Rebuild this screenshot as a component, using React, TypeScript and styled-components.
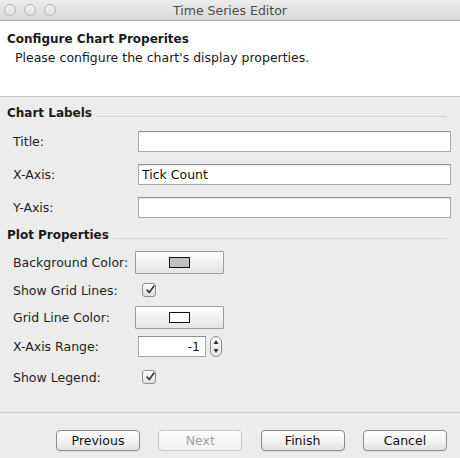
import { createGlobalStyle, styled } from 'styled-components'

const GlobalStyle = createGlobalStyle`
  html, body {
    margin: 0;
    padding: 0;
    background: #ececec;
  }
  body {
    font-family: 'DejaVu Sans', 'Liberation Sans', sans-serif;
    font-size: 12.5px;
    color: #1a1a1a;
  }
`

function Check() {
  return (
    <svg width="14" height="14" viewBox="0 0 14 14">
      <path d="M3 7.2 L6 10.5 L12.5 1.5" fill="none" stroke="#2e2e2e" strokeWidth="2.2" strokeLinecap="round" strokeLinejoin="round" />
    </svg>
  )
}

function Spinner() {
  return (
    <SpinBox>
      <svg width="12" height="21" viewBox="0 0 12 21">
        <path d="M6 4 L8.5 8 L3.5 8 Z" fill="#333" />
        <path d="M6 17 L8.5 13 L3.5 13 Z" fill="#333" />
      </svg>
    </SpinBox>
  )
}

function Section({ title }: { title: string }) {
  return (
    <SectionHead>
      <span>{title}</span>
      <SectionRule />
    </SectionHead>
  )
}

export default function App() {
  return (
    <Window>
      <GlobalStyle />
      <TitleBar>
        <Lights>
          <Light />
          <Light />
          <Light />
        </Lights>
        <TitleText>Time Series Editor</TitleText>
      </TitleBar>

      <Header>
        <HeaderTitle>Configure Chart Properites</HeaderTitle>
        <HeaderSub>Please configure the chart's display properties.</HeaderSub>
      </Header>

      <Body>
        <Section title="Chart Labels" />
        <LabelGrid>
          <Label>Title:</Label>
          <TextField defaultValue="" />
          <Label>X-Axis:</Label>
          <TextField defaultValue="Tick Count" />
          <Label>Y-Axis:</Label>
          <TextField defaultValue="" />
        </LabelGrid>

        <Section title="Plot Properties" />
        <PlotList>
          <Row $h={28}>
            <Label>Background Color:</Label>
            <ColorButton>
              <Swatch $color="#c0c0c0" />
            </ColorButton>
          </Row>
          <Row $h={28}>
            <Label>Show Grid Lines:</Label>
            <CheckBox>
              <Check />
            </CheckBox>
          </Row>
          <Row $h={27}>
            <Label>Grid Line Color:</Label>
            <ColorButton>
              <Swatch $color="#ffffff" />
            </ColorButton>
          </Row>
          <Row $h={30}>
            <Label>X-Axis Range:</Label>
            <NumberWrap>
              <NumberField>-1</NumberField>
              <Spinner />
            </NumberWrap>
          </Row>
          <Row $h={32}>
            <Label>Show Legend:</Label>
            <CheckBox>
              <Check />
            </CheckBox>
          </Row>
        </PlotList>
      </Body>

      <Footer>
        <PushButton>Previous</PushButton>
        <PushButton disabled>Next</PushButton>
        <PushButton>Finish</PushButton>
        <PushButton>Cancel</PushButton>
      </Footer>
    </Window>
  )
}

const Window = styled.div`
  width: 460px;
  height: 458px;
  display: flex;
  flex-direction: column;
  background: #ececec;
  overflow: hidden;
`

const TitleBar = styled.div`
  height: 20px;
  flex: none;
  position: relative;
  display: flex;
  align-items: center;
  justify-content: center;
  background: linear-gradient(#ececec, #d9d9d9);
  border-bottom: 1px solid #a6a6a6;
`

const Lights = styled.div`
  position: absolute;
  left: 4px;
  top: 4px;
  display: flex;
  gap: 8px;
`

const Light = styled.div`
  width: 10px;
  height: 10px;
  border-radius: 50%;
  border: 1px solid #b8b8b8;
  background: linear-gradient(#f2f2f2, #dedede);
`

const TitleText = styled.div`
  font-size: 12.5px;
  color: #4c4c4c;
`

const Header = styled.div`
  height: 76px;
  flex: none;
  box-sizing: border-box;
  background: #ffffff;
  border-bottom: 1px solid #c4c4c4;
  padding: 10px 0 0 7px;
`

const HeaderTitle = styled.div`
  font-weight: bold;
  font-size: 12px;
  line-height: 16px;
`

const HeaderSub = styled.div`
  margin-top: 3px;
  padding-left: 8px;
  line-height: 16px;
`

const Body = styled.div`
  flex: 1;
  padding: 8px 13px 0 7px;
`

const SectionHead = styled.div`
  display: flex;
  align-items: center;
  gap: 4px;
  height: 16px;
  font-weight: bold;
  font-size: 12px;
  line-height: 16px;
`

const SectionRule = styled.div`
  flex: 1;
  height: 1px;
  margin-top: 7px;
  background: #d4d4d4;
`

const LabelGrid = styled.div`
  display: grid;
  grid-template-columns: 125px 1fr;
  grid-auto-rows: 21px;
  row-gap: 12px;
  align-items: center;
  padding: 10px 0 0 6px;
  margin-right: -4px;
  margin-bottom: 9px;
`

const Label = styled.div`
  color: #1e1e1e;
  white-space: nowrap;
`

const TextField = styled.input`
  box-sizing: border-box;
  height: 21px;
  width: 100%;
  margin: 0;
  padding: 0 3px;
  font: inherit;
  color: #111;
  background: #fff;
  border: 1px solid #a9a9a9;
  border-top-color: #8f8f8f;
  box-shadow: inset 0 1px 1px rgba(0, 0, 0, 0.08);
  outline: none;
`

const PlotList = styled.div`
  display: flex;
  flex-direction: column;
  padding: 5px 0 0 6px;
`

const Row = styled.div<{ $h: number }>`
  display: grid;
  grid-template-columns: 122px auto;
  align-items: center;
  height: ${({ $h }) => $h}px;
`

const ColorButton = styled.div`
  box-sizing: border-box;
  width: 89px;
  height: 23px;
  display: flex;
  align-items: center;
  justify-content: center;
  border: 1px solid #9c9c9c;
  border-radius: 1px;
  background: linear-gradient(#ffffff, #f1f1f1 50%, #e4e4e4);
`

const Swatch = styled.div<{ $color: string }>`
  width: 19px;
  height: 9px;
  border: 1px solid #111;
  background: ${({ $color }) => $color};
`

const CheckBox = styled.div`
  box-sizing: border-box;
  width: 14px;
  height: 14px;
  margin-left: 7px;
  border: 1px solid #8e8e8e;
  border-radius: 3px;
  background: linear-gradient(#fdfdfd, #dedede);
  display: flex;
  align-items: flex-end;
  justify-content: center;
  overflow: visible;

  svg {
    margin-bottom: -1px;
    margin-left: 2px;
  }
`

const NumberWrap = styled.div`
  display: flex;
  align-items: center;
  gap: 4px;
  margin-left: 3px;
`

const NumberField = styled.div`
  box-sizing: border-box;
  width: 68px;
  height: 21px;
  padding-right: 5px;
  text-align: right;
  line-height: 20px;
  background: #fff;
  border: 1px solid #a9a9a9;
  border-top-color: #8f8f8f;
`

const SpinBox = styled.div`
  box-sizing: border-box;
  width: 12px;
  height: 21px;
  border: 1px solid #8e8e8e;
  border-radius: 6px;
  background: linear-gradient(#fdfdfd, #e6e6e6);
  display: flex;
  align-items: center;
  justify-content: center;

  svg {
    flex: none;
  }
`

const Footer = styled.div`
  height: 46px;
  flex: none;
  box-sizing: border-box;
  border-top: 1px solid #cfcfcf;
  display: flex;
  justify-content: space-between;
  align-items: flex-start;
  padding: 17px 13px 0 56px;
`

const PushButton = styled.button`
  box-sizing: border-box;
  width: 84px;
  height: 21px;
  margin: 0;
  padding: 0;
  font: inherit;
  color: #111;
  border: 1px solid #8c8c8c;
  border-radius: 4px;
  background: linear-gradient(#ffffff, #f3f3f3 50%, #e3e3e3);
  box-shadow: 0 1px 0 rgba(0, 0, 0, 0.06);

  &:disabled {
    color: #a3a3a3;
    border-color: #c8c8c8;
    background: linear-gradient(#fbfbfb, #f1f1f1);
    box-shadow: none;
  }
`
